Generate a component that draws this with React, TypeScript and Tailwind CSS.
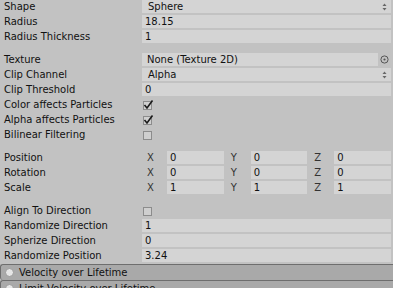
import type { ReactNode } from 'react';

const font = "font-['DejaVu_Sans','Liberation_Sans',sans-serif]";

function Row({ label, children }: { label: string; children?: ReactNode }) {
  return (
    <div className="flex h-[15px] items-start">
      <div className="flex h-[13px] w-[142px] shrink-0 items-center pl-[4px] text-[#111]">
        {label}
      </div>
      <div className="flex h-[13px] min-w-0 flex-1 items-center pr-[2px]">{children}</div>
    </div>
  );
}

function Field({ value, pad = 'pl-[3px]' }: { value: string; pad?: string }) {
  return (
    <div className={`flex h-full flex-1 items-center bg-[#d4d4d4] text-[#111] ${pad}`}>
      {value}
    </div>
  );
}

function Popup({ value }: { value: string }) {
  return (
    <div className="flex h-full flex-1 items-center justify-between bg-[#d4d4d4] pl-[6px] pr-[4px] text-[#111]">
      <span>{value}</span>
      <svg width="5" height="8" viewBox="0 0 5 8">
        <path d="M2.5 0.5 L4.5 3 L0.5 3 Z" fill="#666" />
        <path d="M2.5 7.5 L4.5 5 L0.5 5 Z" fill="#666" />
      </svg>
    </div>
  );
}

function Check({ on }: { on: boolean }) {
  return (
    <div className="relative ml-[1px] mt-[2px] h-[9px] w-[9px] border border-[#8c8c8c] bg-[#cfcfcf]">
      {on ? (
        <svg
          className="absolute -left-[1px] -top-[3px]"
          width="11"
          height="11"
          viewBox="0 0 11 11"
        >
          <path d="M1.5 6 L4 9 L9.5 1.5" fill="none" stroke="#1a1a1a" strokeWidth="1.6" />
        </svg>
      ) : null}
    </div>
  );
}

function Vector({ values }: { values: string[] }) {
  const axes = ['X', 'Y', 'Z'];
  return (
    <div className="flex h-full flex-1 gap-[2px]">
      {axes.map((axis, i) => (
        <div key={axis} className="flex h-full flex-1 items-center">
          <span className="w-[25px] shrink-0 pl-[5px] text-[#333]">{axis}</span>
          <Field value={values[i]} />
        </div>
      ))}
    </div>
  );
}

function Spacer() {
  return <div className="h-[8px]" />;
}

function Header({ title }: { title: string }) {
  return (
    <div className="flex h-[16px] items-center gap-[5px] rounded-l-[3px] border-t border-l border-[#6e6e6e] bg-[#a9a9a9] pl-[4px] text-[#111]">
      <div className="h-[9px] w-[9px] rounded-full border border-[#9a9a9a] bg-[#e6e6e6]" />
      <span>{title}</span>
    </div>
  );
}

export default function App() {
  return (
    <div className={`h-[288px] w-full overflow-hidden bg-[#c2c2c2] text-[10px] leading-none ${font}`}>
      <Row label="Shape">
        <Popup value="Sphere" />
      </Row>
      <Row label="Radius">
        <Field value="18.15" />
      </Row>
      <Row label="Radius Thickness">
        <Field value="1" />
      </Row>
      <Spacer />
      <Row label="Texture">
        <div className="flex h-full flex-1 items-center">
          <Field value="None (Texture 2D)" pad="pl-[5px]" />
          <div className="flex w-[13px] shrink-0 items-center justify-center">
            <svg width="9" height="9" viewBox="0 0 9 9">
              <circle cx="4.5" cy="4.5" r="3.6" fill="none" stroke="#555" strokeWidth="1" />
              <circle cx="4.5" cy="4.5" r="1.1" fill="#555" />
            </svg>
          </div>
        </div>
      </Row>
      <Row label="Clip Channel">
        <Popup value="Alpha" />
      </Row>
      <Row label="Clip Threshold">
        <Field value="0" />
      </Row>
      <Row label="Color affects Particles">
        <Check on />
      </Row>
      <Row label="Alpha affects Particles">
        <Check on />
      </Row>
      <Row label="Bilinear Filtering">
        <Check on={false} />
      </Row>
      <Spacer />
      <Row label="Position">
        <Vector values={['0', '0', '0']} />
      </Row>
      <Row label="Rotation">
        <Vector values={['0', '0', '0']} />
      </Row>
      <Row label="Scale">
        <Vector values={['1', '1', '1']} />
      </Row>
      <Spacer />
      <Row label="Align To Direction">
        <Check on={false} />
      </Row>
      <Row label="Randomize Direction">
        <Field value="1" />
      </Row>
      <Row label="Spherize Direction">
        <Field value="0" />
      </Row>
      <Row label="Randomize Position">
        <Field value="3.24" />
      </Row>
      <Header title="Velocity over Lifetime" />
      <Header title="Limit Velocity over Lifetime" />
    </div>
  );
}
